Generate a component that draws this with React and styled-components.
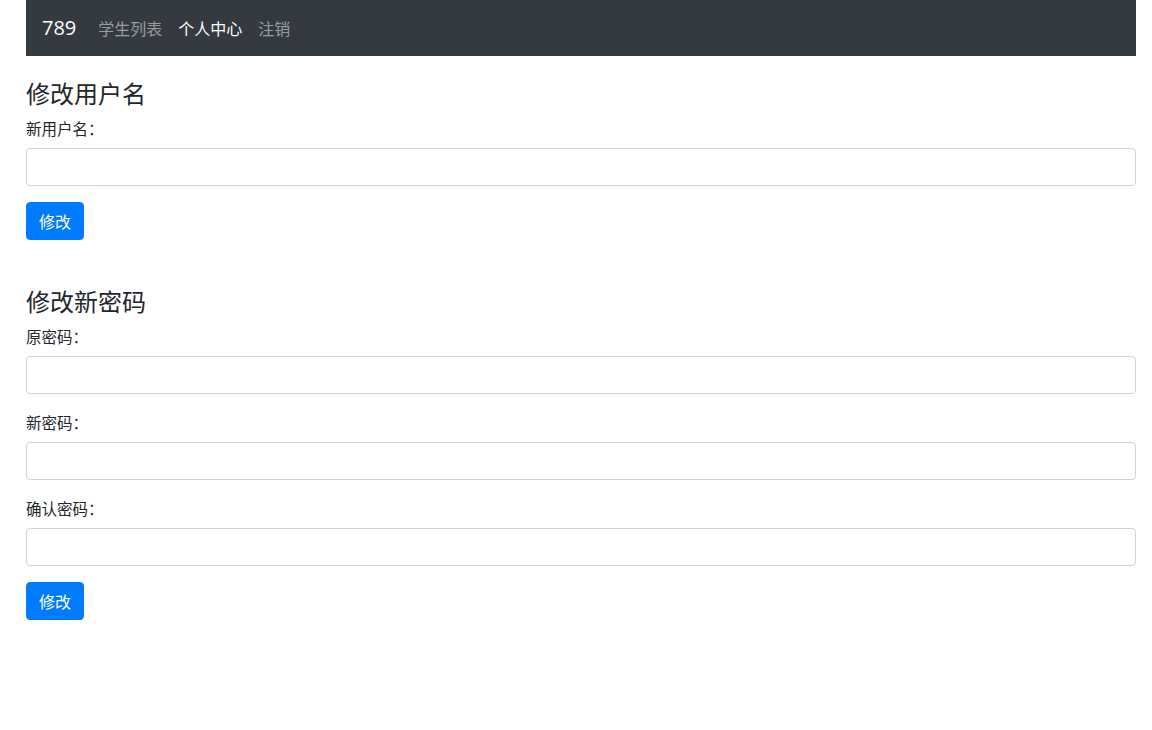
import React from "react";
import styled, { createGlobalStyle } from "styled-components";

const GlobalStyle = createGlobalStyle`
  * { box-sizing: border-box; }
  body {
    margin: 0;
    background: #fff;
    color: #212529;
    font-family: "Noto Sans CJK SC", "Noto Sans", "Liberation Sans", sans-serif;
    font-size: 16px;
    line-height: 1.5;
  }
`;

const Page = styled.div`
  width: 1110px;
  margin-left: 26px;
`;

const Navbar = styled.nav`
  height: 56px;
  background: #343a40;
  display: flex;
  align-items: center;
  padding: 0 16px;
`;

const Brand = styled.a`
  color: #fff;
  font-size: 20px;
  margin-right: 14px;
  text-decoration: none;
  font-family: "Open Sans", "Noto Sans", sans-serif;
`;

const NavLink = styled.a`
  color: ${(p) => (p.$active ? "#fff" : "rgba(255,255,255,.5)")};
  padding: 8px;
  font-size: 16px;
  text-decoration: none;
`;

const Section = styled.section`
  margin-top: ${(p) => p.$top}px;
`;

const Title = styled.h4`
  margin: 0 0 8px;
  font-size: 24px;
  font-weight: 400;
  line-height: 1.2;
`;

const Group = styled.div`
  margin-bottom: 16px;
`;

const Label = styled.label`
  display: block;
  margin-bottom: 8px;
  font-size: 15.5px;
  line-height: 24px;
`;

const Input = styled.input`
  display: block;
  width: 100%;
  height: 38px;
  padding: 6px 12px;
  border: 1px solid #ced4da;
  border-radius: 4px;
  font-size: 16px;
  outline: none;
`;

const Button = styled.button`
  background: #007bff;
  border: 1px solid #007bff;
  color: #fff;
  border-radius: 4px;
  padding: 0 12px;
  height: 38px;
  font-size: 16px;
  font-family: inherit;
  line-height: 1.5;
`;

const Field = ({ label, type }) => (
  <Group>
    <Label>{label}</Label>
    <Input type={type} />
  </Group>
);

export default function App() {
  return (
    <>
      <GlobalStyle />
      <Page>
        <Navbar>
          <Brand href="#">789</Brand>
          <NavLink href="#">学生列表</NavLink>
          <NavLink href="#" $active>个人中心</NavLink>
          <NavLink href="#">注销</NavLink>
        </Navbar>

        <Section $top={23}>
          <Title>修改用户名</Title>
          <Field label="新用户名：" type="text" />
          <Button>修改</Button>
        </Section>

        <Section $top={47}>
          <Title>修改新密码</Title>
          <Field label="原密码：" type="password" />
          <Field label="新密码：" type="password" />
          <Field label="确认密码：" type="password" />
          <Button>修改</Button>
        </Section>
      </Page>
    </>
  );
}
